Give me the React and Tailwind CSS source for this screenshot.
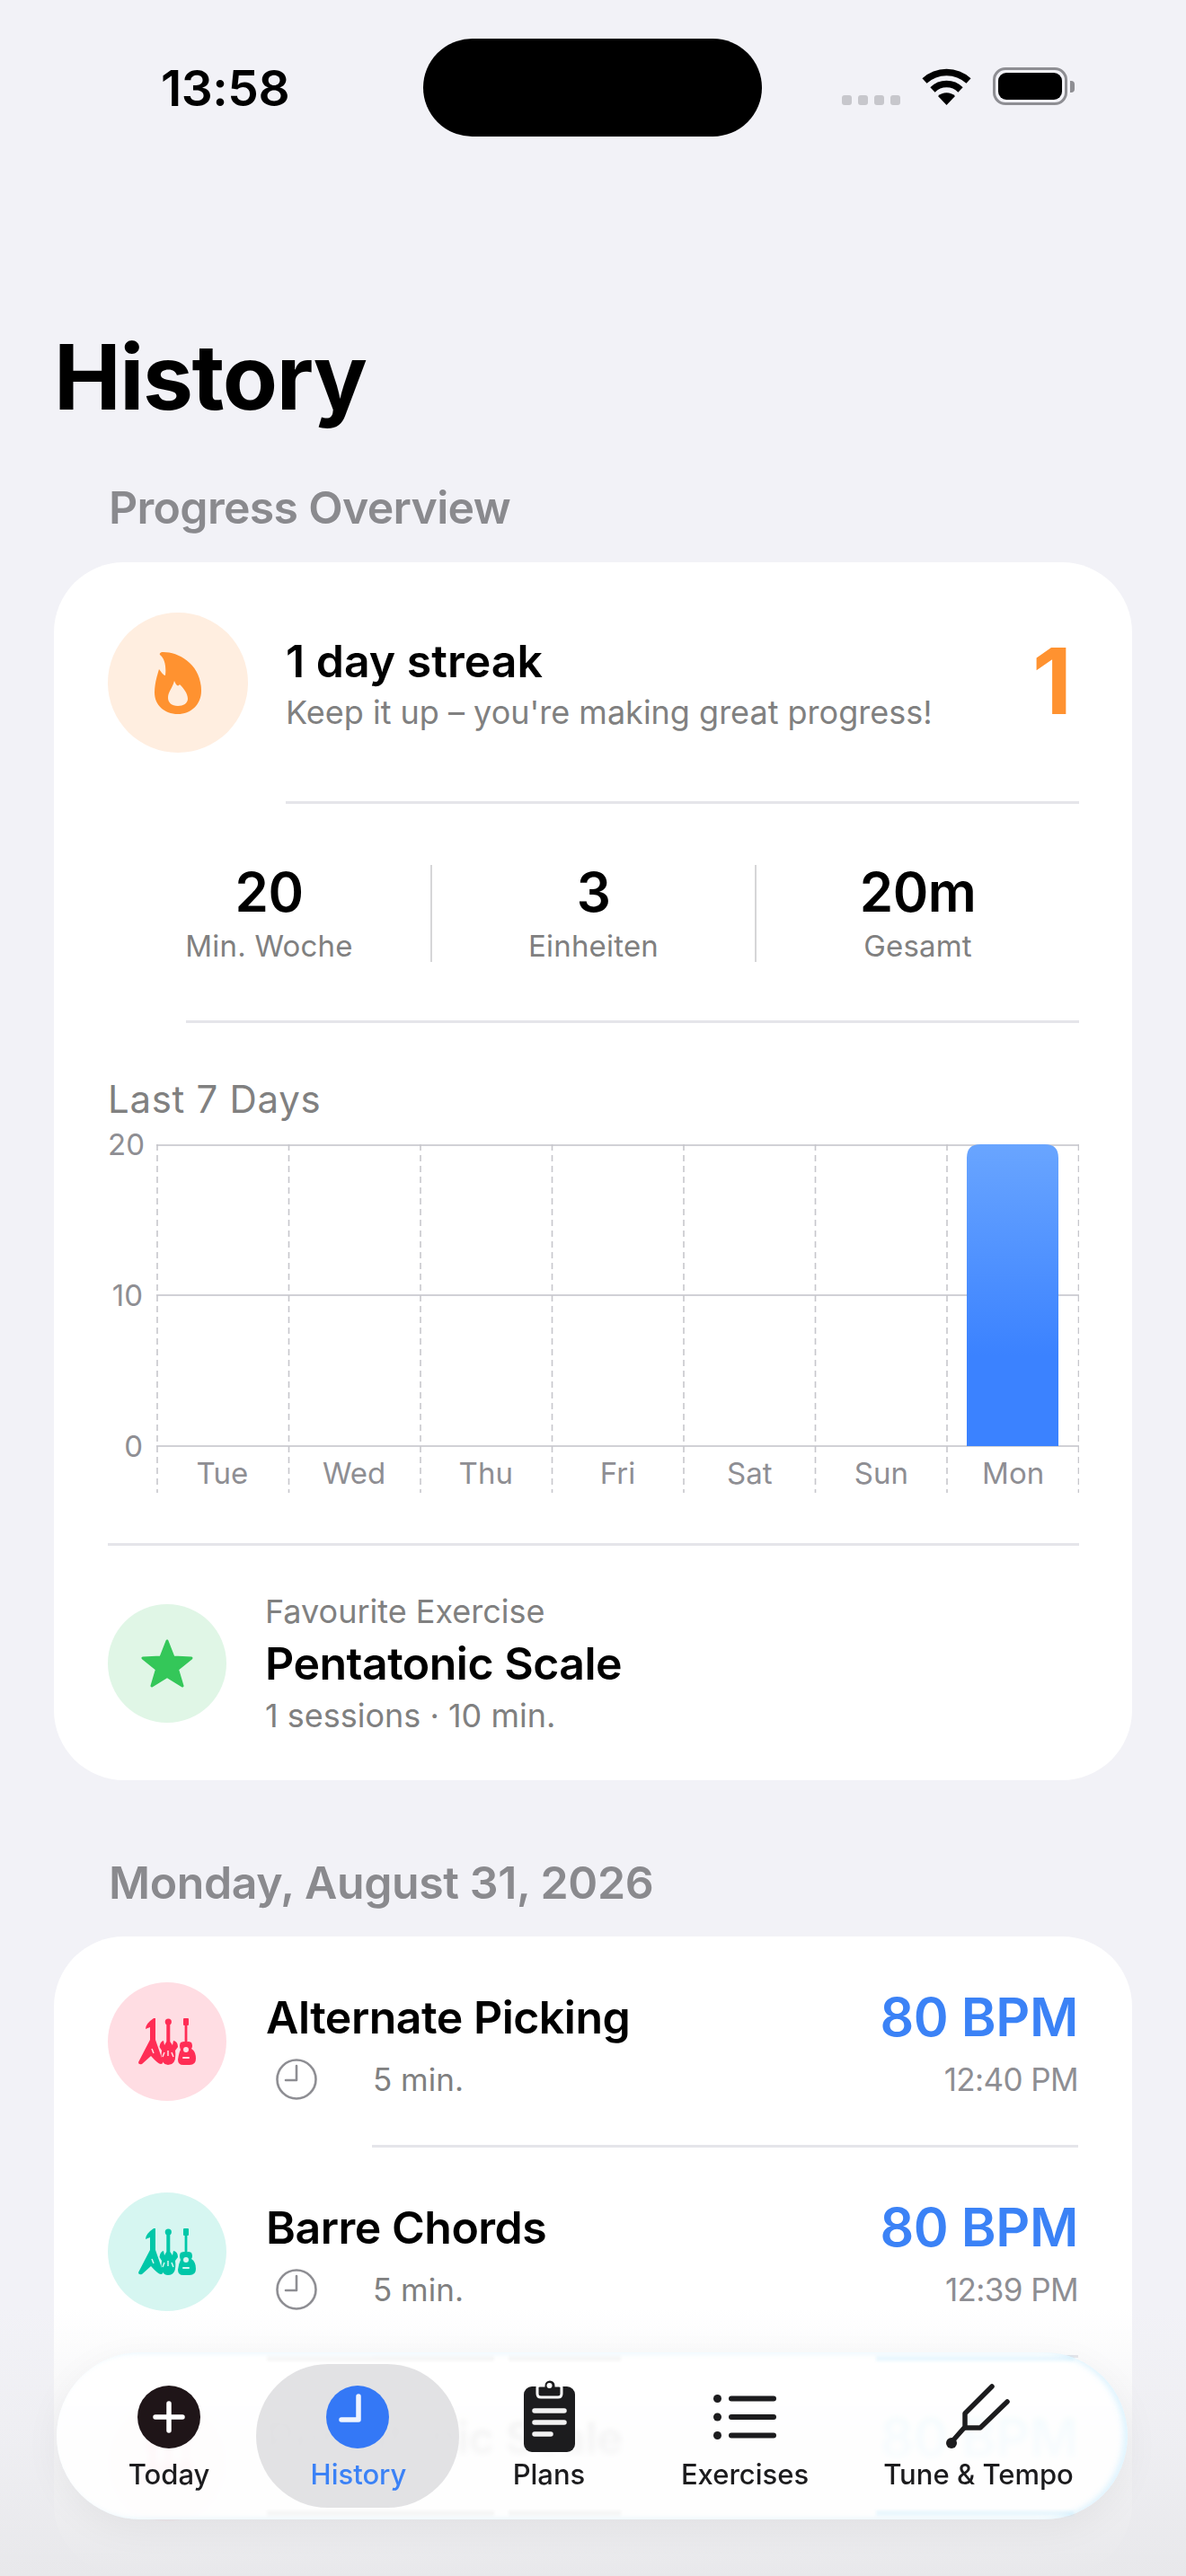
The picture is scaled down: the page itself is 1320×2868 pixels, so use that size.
import { useId } from 'react'

const days = ['Tue', 'Wed', 'Thu', 'Fri', 'Sat', 'Sun', 'Mon']

function Guitars({ color, hole }) {
  return (
    <svg width="64" height="52" viewBox="0 0 64 52" fill={color}>
      {/* flying v */}
      <path d="M17 0 L19 0 V24 L27 47 Q28 51 25 51 Q22 51 14 42 L4 51 Q0 52 0 49 L13 24 V10 L8 12 Q8 6 17 0 Z" />
      <path d="M15 34 l2 5" stroke={hole} strokeWidth="1.5" />
      {/* double cut */}
      <circle cx="33.3" cy="4" r="3.6" />
      <path d="M31.3 6 H35.3 V26 L38 30 L39 25 Q44 26 44 32 L41 36 Q43 52 33 52 Q24 52 26 36 L23.5 32 Q24 26 28 25 L29 30 L31.3 26 Z" />
      <path d="M29 38 l-2 5 M37 38 l2 5 M33 36 v6" stroke={hole} strokeWidth="1.5" />
      {/* acoustic */}
      <rect x="50" y="0" width="6" height="8" rx="1" />
      <rect x="51.6" y="6" width="2.8" height="22" />
      <path d="M47 27 Q52 25 53 27 Q55 25 59 27 Q61 31 59 34 Q64 37 64 45 Q64 52 57 52 H50 Q44 52 44 46 Q45 39 47 35 Q45 30 47 27 Z" />
      <circle cx="53" cy="35" r="3" fill={hole} />
      <rect x="49" y="43" width="8" height="2" rx="1" fill={hole} />
    </svg>
  )
}

function ClockIcon() {
  return (
    <svg width="46" height="46" viewBox="0 0 46 46" fill="none" stroke="#8e8e93" strokeWidth="2.6" strokeLinecap="round" strokeLinejoin="round">
      <circle cx="23" cy="23" r="21.5" />
      <path d="M23 8 V24 H11" />
    </svg>
  )
}

function Session({ name, time, circle, color, bpmClass, last }) {
  return (
    <div className="pt-[50px]">
      <div className="flex h-[131px]">
        <div className={`w-[132px] h-[132px] rounded-full flex items-center justify-center shrink-0 ${circle}`}>
          <Guitars color={color} hole={color === '#ff2d55' ? '#ffdde3' : '#d6f6f1'} />
        </div>
        <div className="ml-[44px] pt-[9px] flex-1">
          <div className="text-[50px] leading-[60px] font-semibold text-black tracking-[-0.5px]">{name}</div>
          {!last && (
            <div className="flex items-center mt-[16px] ml-[11px] h-[46px]">
              <ClockIcon />
              <span className="ml-[62px] text-[35px] text-[#808080]">5 min.</span>
            </div>
          )}
        </div>
        <div className="pt-[9px] text-right">
          <div className={`text-[59px] leading-[60px] font-semibold tracking-[-0.4px] ${bpmClass}`}>80 BPM</div>
          {!last && <div className="mt-[16px] text-[35px] leading-[46px] tracking-[-0.6px] text-[#8e8e93]">{time}</div>}
        </div>
      </div>
      {!last && <div className="ml-[294px] mt-[50px] h-[3px] bg-[#e5e5ea]" />}
    </div>
  )
}

function Chart() {
  const gradId = useId()
  return (
    <div className="flex h-[388px]">
      <div className="w-[39px] -mt-[20px] h-[376px] flex flex-col justify-between text-right text-[33px] leading-[40px] text-[#8e8e93]">
        <span>20</span>
        <span>10</span>
        <span>0</span>
      </div>
      <div className="relative ml-[15px] w-[1027px] h-[388px]">
        <svg className="absolute inset-0" width="1027" height="388" viewBox="0 0 1027 388" fill="none">
          <defs>
            <linearGradient id={gradId} x1="0" y1="0" x2="0" y2="1">
              <stop offset="0" stopColor="#69a5ff" />
              <stop offset="0.7" stopColor="#3b82ff" />
              <stop offset="1" stopColor="#3b82ff" />
            </linearGradient>
          </defs>
          {[1, 168, 336].map((y) => (
            <line key={y} x1="0" x2="1027" y1={y} y2={y} stroke="#d1d1d6" strokeWidth="2" />
          ))}
          {[0, 1, 2, 3, 4, 5, 6, 7].map((i) => (
            <line key={i} x1={1 + i * 146.5} x2={1 + i * 146.5} y1="0" y2="388" stroke="#c7c7cc" strokeWidth="1.6" strokeDasharray="7 5" />
          ))}
          <path d="M902 336 V15 Q902 0 917 0 H989 Q1004 0 1004 15 V336 Z" fill={`url(#${gradId})`} />
        </svg>
        <div className="relative grid grid-cols-7 pt-[346px]">
          {days.map((d) => (
            <div key={d} className="text-center text-[33px] leading-[40px] text-[#8e8e93]">{d}</div>
          ))}
        </div>
      </div>
    </div>
  )
}

function Stat({ value, label }) {
  return (
    <div className="flex-1 text-center">
      <div className="text-[60px] leading-[70px] font-semibold text-black -mt-[4px] tracking-[-0.5px]">{value}</div>
      <div className="text-[33px] leading-[40px] text-[#808080] tracking-[0.2px] mt-[5px]">{label}</div>
    </div>
  )
}

// smeared edge refraction of the row that scrolls under the glass
function Smear({ className }) {
  return (
    <div className={`absolute left-[234px] right-[60px] h-[6px] flex blur-[1.5px] ${className}`}>
      <div className="w-[253px] bg-black/[0.03]" />
      <div className="ml-[16px] w-[125px] bg-black/[0.03]" />
      <div className="ml-auto w-[220px] bg-[#38bdf8]/10" />
    </div>
  )
}

function TabBar() {
  return (
    <div className="absolute left-[63px] top-[2619px] w-[1192px] h-[186px] rounded-[93px] bg-white/90 backdrop-blur-[3px] shadow-[0_10px_40px_rgba(0,0,0,0.05),inset_-5px_0_6px_rgba(186,230,253,0.45)] flex">
      <Smear className="top-[4px]" />
      <Smear className="bottom-[4px]" />

      {/* today */}
      <div className="w-[250px] shrink-0 flex flex-col items-center pt-[31px]">
        <div className="h-[82px] flex items-center justify-center">
          <svg width="70" height="70" viewBox="0 0 70 70">
            <circle cx="35" cy="35" r="35" fill="#1f1518" />
            <path d="M35 20 V50 M20 35 H50" stroke="#fff" strokeWidth="5.5" strokeLinecap="round" />
          </svg>
        </div>
        <span className="mt-[3px] text-[31px] leading-[40px] font-medium text-[#1c1c1e]">Today</span>
      </div>

      {/* history, selected */}
      <div className="relative w-[170px] shrink-0 flex flex-col items-center pt-[31px]">
        <div className="absolute left-[-28px] top-[13px] w-[226px] h-[160px] rounded-[80px] bg-[#dfdfe1]/90" />
        <div className="relative h-[82px] flex items-center justify-center">
          <svg width="70" height="70" viewBox="0 0 70 70" fill="none">
            <circle cx="35" cy="35" r="35" fill="#3478f6" />
            <path d="M36 12 V38 H17" stroke="#fff" strokeWidth="5.5" strokeLinecap="round" strokeLinejoin="round" opacity="0.92" />
          </svg>
        </div>
        <span className="relative mt-[3px] ml-[2px] text-[31px] leading-[40px] font-medium text-[#3b82f6]">History</span>
      </div>

      {/* plans */}
      <div className="w-[256px] shrink-0 flex flex-col items-center pt-[31px]">
        <div className="h-[82px] flex items-start justify-center -mt-[2px] pb-[2px]">
          <svg width="57" height="82" viewBox="0 0 57 82">
            <rect x="0" y="9" width="57" height="73" rx="9" fill="#1c1c1e" />
            <path d="M15 10 Q15 8 18 8 H22 A7 7 0 0 1 36 8 H39 Q42 8 42 10 V17 Q42 21 38 21 H19 Q15 21 15 17 Z" fill="#1c1c1e" stroke="#fff" strokeWidth="3" />
            <circle cx="28.5" cy="8" r="3" fill="#fff" />
            <path d="M12 36 H45 M12 49 H45 M12 62 H30" stroke="#f2f2f2" strokeWidth="5.5" strokeLinecap="round" />
          </svg>
        </div>
        <span className="text-[31px] leading-[40px] font-medium text-[#1c1c1e] mt-[5px]">Plans</span>
      </div>

      {/* exercises */}
      <div className="w-[180px] shrink-0 flex flex-col items-center pt-[31px]">
        <div className="h-[82px] flex items-center justify-center">
          <svg width="70" height="50" viewBox="0 0 70 50" fill="#1c1c1e">
            <circle cx="4.5" cy="4.5" r="4.5" />
            <circle cx="4.5" cy="25" r="4.5" />
            <circle cx="4.5" cy="45.5" r="4.5" />
            <path d="M20 4.5 H67 M20 25 H67 M20 45.5 H67" stroke="#1c1c1e" strokeWidth="6" strokeLinecap="round" />
          </svg>
        </div>
        <span className="mt-[3px] text-[31px] leading-[40px] font-medium text-[#1c1c1e]">Exercises</span>
      </div>

      {/* tune */}
      <div className="w-[340px] shrink-0 flex flex-col items-center pt-[31px]">
        <div className="h-[82px] flex items-center justify-center">
          <svg width="72" height="74" viewBox="0 0 72 74" fill="none" stroke="#1c1c1e" strokeWidth="5.5" strokeLinecap="round" strokeLinejoin="round">
            <path d="M51 3 L21 33 V48 L6 65" />
            <path d="M21 49 H38 L68 20" />
            <circle cx="6" cy="66" r="6" fill="#1c1c1e" stroke="none" />
          </svg>
        </div>
        <span className="mt-[3px] text-[31px] leading-[40px] font-medium text-[#1c1c1e]">Tune &amp; Tempo</span>
      </div>
    </div>
  )
}

export default function App() {
  return (
    <div className="relative w-[1320px] h-[2868px] overflow-hidden bg-[#f2f2f7] font-['Inter',sans-serif]">
      {/* status bar */}
      <div className="flex items-center pt-[43px]">
        <div className="w-[471px] pl-[179px] text-[55px] leading-[60px] font-semibold text-black tracking-[-0.5px]">13:58</div>
        <div className="w-[377px] h-[109px] rounded-full bg-black" />
        <div className="flex items-end self-start mt-[32px] h-[42px] ml-[89px]">
          <div className="flex gap-[7px]">
            {[0, 1, 2, 3].map((i) => (
              <div key={i} className="w-[11px] h-[11px] rounded-[3px] bg-[#c7c7cc]" />
            ))}
          </div>
          <svg className="ml-[23px]" width="57" height="42" viewBox="0 0 57 42" fill="none" stroke="#000" strokeWidth="7.5">
            <path d="M4 15 A36 36 0 0 1 53 15" />
            <path d="M13 25 A22 22 0 0 1 44 25" />
            <path d="M19 32 L28.5 42 L38 32 A14 14 0 0 0 19 32 Z" fill="#000" stroke="none" />
          </svg>
          <div className="ml-[23px] w-[83px] h-[42px] rounded-[14px] border-[3.5px] border-[#8e8e93] p-[3px]">
            <div className="w-full h-full rounded-[9px] bg-black" />
          </div>
          <div className="w-[5px] h-[13px] mb-[14px] ml-[3px] rounded-r-[4px] bg-[#8e8e93]" />
        </div>
      </div>

      {/* title */}
      <h1 className="mt-[208px] pl-[60px] text-[100px] leading-[120px] font-bold text-black tracking-[-1.4px]">History</h1>

      <div className="mt-[55px] pl-[121px] text-[50px] leading-[60px] font-semibold text-[#8a8a8e] tracking-[-0.7px]">Progress Overview</div>

      {/* overview card */}
      <div className="mx-[60px] mt-[31px] h-[1356px] rounded-[78px] bg-white pl-[60px] pr-[59px] pt-[56px]">
        <div className="flex">
          <div className="w-[156px] h-[156px] rounded-full bg-[#ffeee0] flex items-center justify-center shrink-0">
            <svg width="52" height="70" viewBox="0 0 52 70">
              <path d="M8 1 C26 0 52 14 52 44 C52 60 40 70 26 70 C11 70 0 60 0 46 C0 36 3 27 5 20 C8 24 10 27 12 27 C13 18 12 9 6 4 Q5 2 8 1 Z" fill="#ff9230" />
              <path d="M22 33 C24 38 26 40 28 37 C32 41 37 47 37 53 C37 58 32 61 26 61 C19 61 15 57 15 52 C15 45 20 41 22 33 Z" fill="#ffeee0" />
            </svg>
          </div>
          <div className="ml-[42px] pt-[24px] flex-1">
            <div className="text-[50px] leading-[60px] font-semibold text-black">1 day streak</div>
            <div className="mt-[4px] text-[36px] leading-[46px] text-[#808080]">Keep it up – you&apos;re making great progress!</div>
          </div>
          <div className="pt-[21px] pr-[8px] text-[102px] leading-[110px] font-bold text-[#ff9230]">1</div>
        </div>
        <div className="ml-[198px] mt-[54px] h-[3px] bg-[#e5e5ea]" />

        <div className="mt-[68px] h-[108px] flex items-center">
          <Stat value="20" label="Min. Woche" />
          <div className="w-[2px] h-[108px] bg-[#d6d6d8]" />
          <Stat value="3" label="Einheiten" />
          <div className="w-[2px] h-[108px] bg-[#d6d6d8]" />
          <Stat value="20m" label="Gesamt" />
        </div>
        <div className="ml-[87px] mt-[65px] h-[3px] bg-[#e5e5ea]" />

        <div className="mt-[60px] text-[42px] leading-[50px] text-[#808080] tracking-[0.7px]">Last 7 Days</div>
        <div className="mt-[25px]">
          <Chart />
        </div>
        <div className="mt-[56px] h-[3px] bg-[#e5e5ea]" />

        <div className="flex mt-[65px]">
          <div className="w-[132px] h-[132px] rounded-full bg-[#e0f6e6] flex items-center justify-center shrink-0">
            <svg width="58" height="54" viewBox="0 0 58 54">
              <path d="M29 2 L36 20 L56 21 L40.5 33.5 L46 52 L29 41.5 L12 52 L17.5 33.5 L2 21 L22 20 Z" fill="#34c759" stroke="#34c759" strokeWidth="3" strokeLinejoin="round" />
            </svg>
          </div>
          <div className="ml-[43px] -mt-[15px]">
            <div className="text-[36px] leading-[46px] text-[#808080]">Favourite Exercise</div>
            <div className="mt-[5px] text-[50px] leading-[60px] font-semibold text-black tracking-[-0.5px]">Pentatonic Scale</div>
            <div className="mt-[5px] text-[36px] leading-[46px] text-[#808080]">1 sessions · 10 min.</div>
          </div>
        </div>
      </div>

      <div className="mt-[84px] pl-[121px] text-[50px] leading-[60px] font-semibold text-[#8a8a8e] tracking-[-0.4px]">Monday, August 31, 2026</div>

      {/* sessions */}
      <div className="mx-[60px] mt-[30px] rounded-[78px] bg-white pl-[60px] pr-[60px] pt-[1px] pb-[60px]">
        <Session name="Alternate Picking" time="12:40 PM" circle="bg-[#ffdde3]" color="#ff2d55" bpmClass="text-[#3b82f6]" />
        <Session name="Barre Chords" time="12:39 PM" circle="bg-[#d6f6f1]" color="#00c7a8" bpmClass="text-[#3b82f6]" />
        <Session name="Pentatonic Scale" circle="bg-[#ffdde3]" color="#ff2d55" bpmClass="text-[#38bdf8]" last />
      </div>

      {/* fade under the tab bar */}
      <div className="absolute left-0 right-0 top-[2570px] h-[298px] bg-gradient-to-b from-[#f2f2f7]/0 via-[#ececef]/60 to-[#e8e8eb]" />

      <TabBar />
    </div>
  )
}
